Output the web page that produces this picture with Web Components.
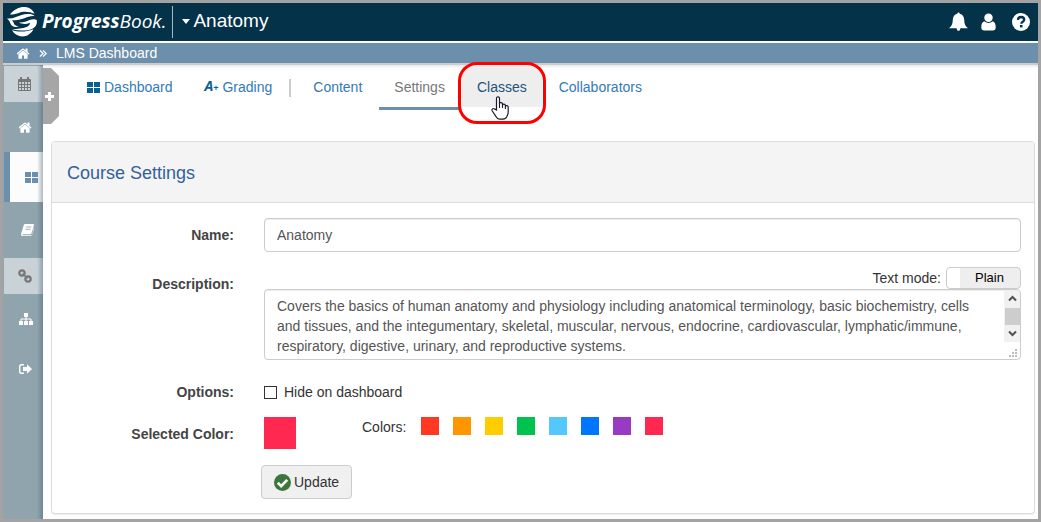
<!DOCTYPE html>
<html lang="en">
<head>
<meta charset="utf-8">
<meta name="viewport" content="width=device-width, initial-scale=1">
<title>LMS Dashboard - Anatomy</title>
<style>
  html, body { margin: 0; }
  body { font: 14px/20px "Liberation Sans", Arial, sans-serif; color: #333; background: #fff; }
</style>
</head>
<body>
<pb-app></pb-app>

<script>
const define = (name, markup, setup) => {
  const template = document.createElement('template');
  template.innerHTML = markup;
  customElements.define(name, class extends HTMLElement {
    constructor() {
      super();
      this.attachShadow({ mode: 'open' }).append(template.content.cloneNode(true));
    }
    connectedCallback() { if (setup) setup(this, this.shadowRoot); }
  });
};

const ICONS = {
  home: ['80 240 1632 1300', '<path d="M1408 992v480q0 26-19 45t-45 19h-384v-384h-256v384h-384q-26 0-45-19t-19-45v-480q0-1 .5-3t.5-3l575-474 575 474q1 2 1 6zm223-69l-62 74q-8 9-21 11h-3q-13 0-21-7l-692-577-692 577q-12 8-24 7-13-2-21-11l-62-74q-8-10-7-23.5t11-21.5l719-599q32-26 76-26t76 26l244 204v-195q0-14 9-23t23-9h192q14 0 23 9t9 23v408l219 182q10 8 11 21.5t-7 23.5z"/>'],
  chevrons: ['0 0 9 9', '<path d="M1 1l3.500 3.500L1 8M4.500 1L8 4.500 4.500 8" fill="none" stroke="currentColor" stroke-width="1.500"/>'],
  bell: ['0 0 20 20', '<path d="M10 0c.8 0 1.300.6 1.300 1.400 3 .6 4.500 3 4.700 6.200.2 4 .8 6.400 4 8.900H12c-.2 1.700-1 2.700-2 2.700s-1.800-1-2-2.700H0c3.200-2.500 3.800-4.900 4-8.900.2-3.200 1.700-5.600 4.700-6.200C8.700.6 9.200 0 10 0z"/>'],
  user: ['0 0 16 18', '<circle cx="8" cy="4.500" r="4.500"/><path d="M3.700 8.300C5 9.600 6.400 10 8 10s3-.4 4.300-1.700c2.400.7 3.400 2.800 3.400 6.200 0 2.200-1.200 3.500-3.200 3.500h-9C1.500 18 .3 16.700.3 14.500c0-3.400 1-5.500 3.400-6.200z"/>'],
  help: ['0 0 18 18', '<circle cx="9" cy="9" r="9"/><path d="M5.900 6.800C6.100 4.900 7.300 4 9 4c1.900 0 3.200 1.100 3.200 2.700 0 2-2.900 2.100-2.900 4" fill="none" stroke="#033249" stroke-width="2.300"/><path d="M8 12h2.500v2.400H8z" fill="#033249"/>'],
  calendar: ['0 0 13 14', '<path d="M1 2h11a1 1 0 0 1 1 1v10a1 1 0 0 1-1 1H1a1 1 0 0 1-1-1V3a1 1 0 0 1 1-1zm0 3v2h2V5zm3 0v2h2V5zm3 0v2h2V5zm3 0v2h2V5zM1 8v2h2V8zm3 0v2h2V8zm3 0v2h2V8zm3 0v2h2V8zM1 11v2h2v-2zm3 0v2h2v-2zm3 0v2h2v-2zm3 0v2h2v-2z" fill-rule="evenodd"/><path d="M2 0h2v4H2zM9 0h2v4H9z"/>'],
  grid: ['0 0 13 11', '<path d="M0 0h6v5H0zM7 0h6v5H7zM0 6h6v5H0zM7 6h6v5H7z"/>'],
  book: ['0 0 13 12', '<path d="M4.200 0h7.600c1 0 1.400.7 1.100 1.600l-2.300 7.500c-.3.800-.9 1.200-1.700 1.200H2c-.5 0-.7.4-.3.900h7.800c.7 0 1.200-.3 1.400-.9l2-6.500c.2.400.2.800.1 1.200L11 10.800c-.3.800-.9 1.200-1.700 1.200H1.700C.4 12-.3 10.800.2 9.600L2.700 1.300C2.900.5 3.500 0 4.200 0z"/><path d="M5.200 3h5M4.500 5.300h5" stroke="#90a4ae" stroke-width=".9"/>'],
  link: ['0 0 14 14', '<g fill="none" stroke="currentColor" stroke-width="2.200"><circle cx="4" cy="4" r="2.700"/><circle cx="10" cy="10" r="2.700"/><path d="M4.500 4.500l5 5" stroke-width="1.600"/></g>'],
  sitemap: ['0 0 14 12', '<path d="M5 0h4v4H5zM0 8h4v4H0zM5 8h4v4H5zM10 8h4v4h-4z"/><path d="M7 4v4M2 8V6h10v2" fill="none" stroke="currentColor"/>'],
  signout: ['0 0 13 10', '<path d="M5 .7H2.500A1.800 1.800 0 0 0 .7 2.500v5a1.800 1.800 0 0 0 1.800 1.800H5" fill="none" stroke="currentColor" stroke-width="1.400"/><path d="M4 3h4V.3L13 5 8 9.700V7H4z"/>'],
  plus: ['0 0 9 9', '<path d="M3 0h3v3h3v3H6v3H3V6H0V3h3z"/>'],
  check: ['0 0 17 17', '<circle cx="8.500" cy="8.500" r="8.500" fill="#3c763d"/><path d="M3.800 8.700l3.400 3.400 6-6.200" fill="none" stroke="#fff" stroke-width="2.700"/>'],
  up: ['0 0 9 9', '<path d="M1 6.500L4.500 3 8 6.500" fill="none" stroke="currentColor" stroke-width="2"/>'],
  down: ['0 0 9 9', '<path d="M1 2.500L4.500 6 8 2.500" fill="none" stroke="currentColor" stroke-width="2"/>'],
  grip: ['0 0 8 8', '<path d="M6 0h2v2H6zM3 3h2v2H3zM6 3h2v2H6zM0 6h2v2H0zM3 6h2v2H3zM6 6h2v2H6z"/>'],
  hand: ['0 0 18 24', '<path d="M5.500 14V2.300C5.500.3 8.500.3 8.500 2.300V8v-.5c.3-1.500 2.800-1.200 3 .4V9c.3-1.300 2.600-1.100 2.900.3v.9c.5-1.100 2.800-.8 2.800 1v5c0 2-.8 2.800-1.300 4.300-.8 1.700-2 2.600-4 2.600H8.500c-1.600 0-2.600-.8-3.300-2.300L1.300 15c-1-1.900.7-3.100 2.200-2.100z" fill="#fff" stroke="#1b1b2f" stroke-width="1.200"/><path d="M8.500 7v5M11.500 8v4M14.400 9.500V13" fill="none" stroke="#1b1b2f" stroke-width="1.100"/>']
};

define('pb-icon', `
  <style>
    :host { display: block; flex: none; }
    svg { display: block; width: 100%; height: 100%; fill: currentColor; }
  </style>
  <svg aria-hidden="true"></svg>`, (el, root) => {
  const [box, shapes] = ICONS[el.getAttribute('name')];
  const svg = root.querySelector('svg');
  svg.setAttribute('viewBox', box);
  svg.innerHTML = shapes;
  const [, , w, h] = box.split(' ').map(Number);
  el.style.width = (el.getAttribute('w') || w) + 'px';
  el.style.height = (el.getAttribute('h') || h) + 'px';
});

define('pb-header', `
  <style>
    :host { display: flex; align-items: center; justify-content: space-between; height: 38px;
            background: #033249; color: #fff; border-bottom: 2px solid #fff; }
    .left, .brand, .tools { display: flex; align-items: center; }
    .brand { gap: 4px; padding: 0 6px 0 4px; color: #fff; text-decoration: none;
             font: italic 19px/32px "Open Sans", sans-serif; }
    .brand svg { width: 31px; height: 32px; }
    .brand span { padding-bottom: 2px; }
    .course { display: flex; align-items: center; gap: 3px; height: 32px; padding: 0 9px 2px; border: 0;
              border-left: 1px solid #a9b6bd; background: none; color: #fff;
              font: 19px/30px "Liberation Sans", Arial, sans-serif; }
    .caret { border: 4px solid transparent; border-top: 5px solid #fff; border-bottom: 0; }
    .tools { gap: 13px; padding-right: 8px; }
    .tools button { display: block; padding: 0; border: 0; background: none; color: #fff; }
    .tools button:last-child { margin-left: 3px; }
  </style>
  <div class="left">
    <a class="brand" href="#">
      <svg viewBox="0 0 31 32" aria-hidden="true" fill="#fff">
        <path d="M3 8.500C7 3 13 .5 18.500 1c4.500.6 7.500 3 9 6.800-4-2-8.500-2.600-13-1.800-2.500.6-5 2.500-11.500 2.500z"/>
        <path d="M0 12.500c3 .3 6-.2 9-1.500C13.500 9 18 7.300 23 8.100c2 .3 3.500 1 4.500 2-4-.4-7 .9-9.500 1.900-4.500 1.900-9 2.400-13 2.300 1 .8 1.500 1.900 1.800 3 .5 1.700 2 2.800 5.200 3-3.500 1.400-7.500.5-8.500-2.500C2.800 15.500 2 14.500 0 12.500z"/>
        <path d="M12 16.500c4.500.2 7.500-1.200 10.500-2.500 3-1.200 6-1.200 7.500.5.200 4-1.500 7-5 8.500-5.500 2.100-13 2-20 .2 5.500-.4 10.500-.6 14.500-2.200 2.300-1 3.300-2.300 3.500-4.300-3.500 1.500-7.500 1.800-11-.2z"/>
        <path d="M5 24.300c6.500 1.900 14 1.900 21.500-1C24 28 20 30.500 15.500 30.500c-4.500 0-8-2.200-10.500-6.200z"/>
      </svg>
      <span><b>Progress</b>Book.</span>
    </a>
    <button class="course" type="button"><span class="caret"></span>Anatomy</button>
  </div>
  <div class="tools">
    <button type="button" aria-label="Notifications"><pb-icon name="bell" w="19" h="20"></pb-icon></button>
    <button type="button" aria-label="Account"><pb-icon name="user" w="15" h="18"></pb-icon></button>
    <button type="button" aria-label="Help"><pb-icon name="help"></pb-icon></button>
  </div>`);

define('pb-breadcrumb', `
  <style>
    :host { display: block; background: #6c8fab; color: #fff; border-bottom: 2px solid #ccc; }
    nav { display: flex; align-items: center; gap: 9px; height: 20px; padding-left: 14px; }
    a { color: #fff; text-decoration: none; }
  </style>
  <nav aria-label="Breadcrumb">
    <a href="#" aria-label="Home"><pb-icon name="home" w="13" h="11"></pb-icon></a>
    <pb-icon name="chevrons" w="8" h="9"></pb-icon>
    <a href="#">LMS Dashboard</a>
  </nav>`);

define('pb-sidebar', `
  <style>
    :host { display: block; position: relative; flex: none; width: 40px; background: #90a4ae; }
    nav { display: flex; flex-direction: column; padding-top: 1px; }
    a { display: flex; align-items: center; justify-content: center; height: 50px; padding-left: 5px; color: #fff; }
    a.tint { height: 36px; padding: 0; margin-left: 1px; padding-left: 2px; background: #c9d2d7; color: #777; }
    a.active { margin-left: 1px; padding-left: 10px; border-left: 6px solid #6c8fab; background: #fcfcfc; color: #6c8fab; }
    a.book { height: 56px; padding-left: 8px; }
    .shade { position: absolute; top: 0; right: 0; bottom: 0; width: 6px;
             background: linear-gradient(to right, rgba(60, 85, 105, 0), rgba(60, 85, 105, .4)); pointer-events: none; }
    .handle { position: absolute; top: 3px; left: 100%; z-index: 1; display: flex; align-items: center;
              width: 16px; height: 56px; padding: 0 0 0 2px; border: 0; background: #a6a6a6; color: #fff;
              clip-path: polygon(0 0, 8px 0, 100% 8px, 100% 48px, 8px 100%, 0 100%); }
  </style>
  <nav aria-label="Main">
    <a class="tint" href="#" aria-label="Calendar"><pb-icon name="calendar"></pb-icon></a>
    <a href="#" aria-label="Home"><pb-icon name="home" w="13" h="11"></pb-icon></a>
    <a class="active" href="#" aria-label="Dashboard"><pb-icon name="grid"></pb-icon></a>
    <a class="book" href="#" aria-label="Gradebook"><pb-icon name="book"></pb-icon></a>
    <a class="tint" href="#" aria-label="Links"><pb-icon name="link"></pb-icon></a>
    <a href="#" aria-label="Structure"><pb-icon name="sitemap"></pb-icon></a>
    <a href="#" aria-label="Sign out"><pb-icon name="signout"></pb-icon></a>
  </nav>
  <span class="shade"></span>
  <button class="handle" type="button" aria-label="Expand"><pb-icon name="plus"></pb-icon></button>`);

define('pb-tab', `
  <style>
    :host { display: block; position: relative; }
    a { display: flex; align-items: center; gap: 4px; height: 40px; padding: 2px 15px 0;
        border-bottom: 3px solid transparent; color: #337ab7; text-decoration: none; white-space: nowrap; }
    :host([state="current"]) a { color: #777; border-color: #6c8fab; }
    :host([state="hover"]) { z-index: 2; }
    :host([state="hover"]) a { color: #23527c; background: #eee; background-clip: padding-box; border-radius: 4px; }
    .ring, .hand { display: none; position: absolute; }
    :host([state="hover"]) .ring { display: block; inset: -3px -4px -14px; border: 3px solid #f00; border-radius: 19px; }
    :host([state="hover"]) .hand { display: block; top: 31px; left: 29px; }
  </style>
  <a href="#"><slot></slot></a>
  <span class="ring"></span>
  <pb-icon class="hand" name="hand"></pb-icon>`);

define('pb-tabs', `
  <style>
    :host { display: block; }
    nav { display: flex; gap: 2px; padding-left: 29px; box-shadow: inset 0 4px 4px -4px #ccc; }
    pb-icon { color: #0a6191; }
    .grade { color: #0a6191; font: italic bold 14px/20px "Open Sans", sans-serif; }
    .grade small { font-size: 9px; }
    .rule { width: 2px; height: 18px; margin: 14px 5px 0 0; background: #ccc; }
  </style>
  <nav aria-label="Course">
    <pb-tab><pb-icon name="grid"></pb-icon>Dashboard</pb-tab>
    <pb-tab><span class="grade" aria-hidden="true">A<small>+</small></span>Grading</pb-tab>
    <span class="rule"></span>
    <pb-tab>Content</pb-tab>
    <pb-tab state="current">Settings</pb-tab>
    <pb-tab state="hover">Classes</pb-tab>
    <pb-tab>Collaborators</pb-tab>
  </nav>`);

define('pb-panel', `
  <style>
    :host { display: block; border: 1px solid #ddd; border-radius: 4px; background: #fff;
            box-shadow: 0 1px 1px rgba(0, 0, 0, .08); }
    header { padding: 21px 15px 19px; border-bottom: 1px solid #ddd; border-radius: 3px 3px 0 0; background: #f4f4f4; }
    h2 { margin: 0; color: #336199; font-size: 18px; line-height: 20px; font-weight: normal; }
    .body { padding: 15px 13px 14px 0; }
  </style>
  <header><h2><slot name="title"></slot></h2></header>
  <div class="body"><slot></slot></div>`);

define('pb-field', `
  <style>
    :host { display: grid; grid-template-columns: 182px minmax(0, 1fr); column-gap: 30px; align-items: start; }
    .label { padding-top: 7px; text-align: right; font-weight: bold; color: #444; }
  </style>
  <div class="label"><slot name="label"></slot></div>
  <div><slot></slot></div>`);

define('pb-course-form', `
  <style>
    :host { display: block; }
    form { display: flex; flex-direction: column; gap: 15px; }
    input, textarea, button { margin: 0; font: inherit; }
    #name, #description { display: block; box-sizing: border-box; width: 100%; padding: 6px 12px;
      border: 1px solid #ccc; border-radius: 4px; color: #555; background: #fff;
      box-shadow: inset 0 1px 1px rgba(0, 0, 0, .075); }
    #name { height: 34px; }
    #description { height: 71px; padding-right: 40px; resize: none; overflow: hidden; }
    .mode { display: flex; justify-content: flex-end; align-items: center; gap: 5px; }
    .toggle { width: 75px; height: 22px; padding: 0 0 0 12px; border: 1px solid #ccc; border-radius: 4px;
      font-size: 13px; line-height: 20px; color: #000;
      background: linear-gradient(to right, #fff 13px, #eee 13px); }
    .area { position: relative; }
    .scroll { position: absolute; top: 1px; right: 1px; display: flex; flex-direction: column; align-items: center;
      justify-content: space-between; box-sizing: border-box; width: 16px; height: 52px; padding: 4px 0;
      background: #f1f1f1; color: #505050; border-radius: 0 3px 0 0; }
    .thumb { width: 15px; height: 17px; background: #cdcdcd; }
    .grip { position: absolute; right: 4px; bottom: 3px; color: #bbb; }
    .options { display: flex; align-items: center; gap: 7px; padding-top: 7px; }
    #hide { appearance: none; width: 13px; height: 13px; border: 1px solid #333; background: #fff; }
    .colors { display: flex; align-items: flex-start; }
    .selected { display: block; width: 32px; height: 32px; margin-right: 66px; background: #ff2850; }
    fieldset { display: flex; gap: 14px; margin: 0; padding: 0; border: 0; min-width: 0; }
    #colors { min-width: 45px; }
    .swatch { appearance: none; width: 18px; height: 18px; background: var(--c); }
    .update { display: flex; align-items: center; gap: 3px; height: 34px; margin: 1px 0 0 -3px; padding: 0 12px;
      border: 1px solid #ccc; border-radius: 4px; background: #f0f0f0; color: #333; }
    .update pb-icon { margin-top: 1px; }
  </style>
  <form>
    <pb-field>
      <label slot="label" for="name">Name:</label>
      <input id="name" type="text" value="Anatomy">
    </pb-field>
    <pb-field>
      <label slot="label" for="description">Description:</label>
      <div class="mode"><label for="mode">Text mode:</label><button id="mode" class="toggle" type="button">Plain</button></div>
      <div class="area">
        <textarea id="description">Covers the basics of human anatomy and physiology including anatomical terminology, basic biochemistry, cells and tissues, and the integumentary, skeletal, muscular, nervous, endocrine, cardiovascular, lymphatic/immune, respiratory, digestive, urinary, and reproductive systems.</textarea>
        <div class="scroll"><pb-icon name="up"></pb-icon><span class="thumb"></span><pb-icon name="down"></pb-icon></div>
        <pb-icon class="grip" name="grip"></pb-icon>
      </div>
    </pb-field>
    <pb-field>
      <span slot="label">Options:</span>
      <div class="options"><input id="hide" type="checkbox"><label for="hide">Hide on dashboard</label></div>
    </pb-field>
    <pb-field>
      <span slot="label">Selected Color:</span>
      <div class="colors">
        <span class="selected"></span>
        <fieldset aria-labelledby="colors"><span id="colors">Colors:</span></fieldset>
      </div>
    </pb-field>
    <pb-field>
      <button class="update" type="submit"><pb-icon name="check"></pb-icon>Update</button>
    </pb-field>
  </form>`, (el, root) => {
  const palette = { Red: '#ff3823', Orange: '#ff9600', Yellow: '#ffcc00', Green: '#00c24f',
                    Sky: '#54c7fc', Blue: '#0076ff', Purple: '#983bc2', Pink: '#ff2850' };
  const set = root.querySelector('fieldset');
  for (const [name, color] of Object.entries(palette)) {
    const input = document.createElement('input');
    input.type = 'radio';
    input.name = 'color';
    input.className = 'swatch';
    input.setAttribute('aria-label', name);
    input.style.setProperty('--c', color);
    input.addEventListener('change', () => { root.querySelector('.selected').style.background = color; });
    set.append(input);
  }
});

define('pb-app', `
  <style>
    :host { display: flex; flex-direction: column; box-sizing: border-box; min-height: 100vh; border: 3px solid #a3a3a3; }
    .page { display: flex; flex: 1; }
    main { flex: 1; min-width: 0; }
    pb-panel { margin: 31px 3px 5px 8px; }
  </style>
  <pb-header></pb-header>
  <pb-breadcrumb></pb-breadcrumb>
  <div class="page">
    <pb-sidebar></pb-sidebar>
    <main>
      <pb-tabs></pb-tabs>
      <pb-panel>
        <span slot="title">Course Settings</span>
        <pb-course-form></pb-course-form>
      </pb-panel>
    </main>
  </div>`);
</script>
</body>
</html>
